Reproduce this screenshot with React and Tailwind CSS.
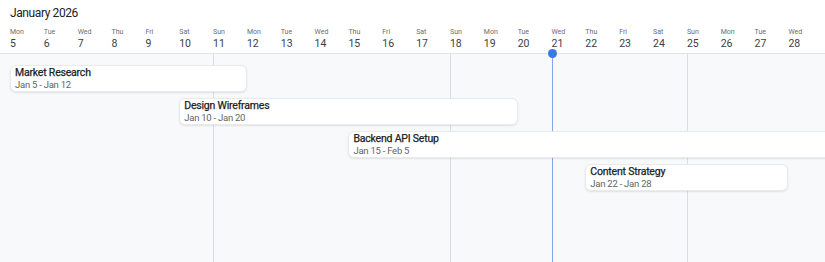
const DAY = 237 / 7;
const COLS = 32;

const DAYS = [
  ['Mon', 5], ['Tue', 6], ['Wed', 7], ['Thu', 8], ['Fri', 9], ['Sat', 10], ['Sun', 11],
  ['Mon', 12], ['Tue', 13], ['Wed', 14], ['Thu', 15], ['Fri', 16], ['Sat', 17], ['Sun', 18],
  ['Mon', 19], ['Tue', 20], ['Wed', 21], ['Thu', 22], ['Fri', 23], ['Sat', 24], ['Sun', 25],
  ['Mon', 26], ['Tue', 27], ['Wed', 28],
];

// start is the day index from Jan 5, span in days
const TASKS = [
  { name: 'Market Research', dates: 'Jan 5 - Jan 12', start: 0, span: 7 },
  { name: 'Design Wireframes', dates: 'Jan 10 - Jan 20', start: 5, span: 10 },
  { name: 'Backend API Setup', dates: 'Jan 15 - Feb 5', start: 10, span: 21 },
  { name: 'Content Strategy', dates: 'Jan 22 - Jan 28', start: 17, span: 6 },
];

const SUNDAYS = [6, 13, 20];
const TODAY = 16;

export default function App() {
  const gridCols = { gridTemplateColumns: `repeat(${COLS}, ${DAY}px)` };

  return (
    <div className="w-[825px] h-[262px] overflow-hidden bg-[#f8f9fa] font-['Roboto',sans-serif] relative">
      <div className="bg-white border-b border-[#e3e4e6] pl-[10px] relative">
        <div className="pt-[5px] h-[27px] text-[12px] tracking-[-0.4px] text-[#202124] leading-[16px]">January 2026</div>
        <div className="grid h-[26px] pt-[1px]" style={gridCols}>
          {DAYS.map(([d, n]) => (
            <div key={n} className="flex flex-col">
              <span className="text-[7px] leading-[9px] text-[#6b6e73]">{d}</span>
              <span className="text-[10.5px] leading-[13px] text-[#3c4043]">{n}</span>
            </div>
          ))}
        </div>
        <div
          className="absolute bottom-[-5px] w-[9px] h-[9px] rounded-full bg-[#3b78e7] z-10"
          style={{ left: 10 + TODAY * DAY - 4 }}
        />
      </div>

      <div
        className="grid pl-[10px] pt-[11px] gap-y-[6px] h-[208px]"
        style={{ ...gridCols, gridTemplateRows: 'repeat(4, 27px) 1fr' }}
      >
        {SUNDAYS.map((c) => (
          <div
            key={c}
            className="border-l border-[#dcdde0] mt-[-11px]"
            style={{ gridColumn: `${c + 1} / span 1`, gridRow: '1 / -1' }}
          />
        ))}
        <div
          className="border-l-[1.5px] border-[#84a6ec] mt-[-11px]"
          style={{ gridColumn: `${TODAY + 1} / span 1`, gridRow: '1 / -1' }}
        />
        {TASKS.map((t, i) => (
          <div
            key={t.name}
            className="bg-white rounded-[6px] shadow-[0_1px_2px_rgba(0,0,0,0.1)] border border-[#e9eaec] px-[4px] pt-[1px] z-[1] min-w-0"
            style={{ gridColumn: `${t.start + 1} / span ${t.span}`, gridRow: `${i + 1}` }}
          >
            <div className="text-[10.5px] tracking-[-0.2px] leading-[12px] text-[#202124] whitespace-nowrap [-webkit-text-stroke:0.25px_#202124]">{t.name}</div>
            <div className="text-[9.5px] tracking-[-0.25px] leading-[12px] text-[#5f6368] whitespace-nowrap">{t.dates}</div>
          </div>
        ))}
      </div>
    </div>
  );
}
